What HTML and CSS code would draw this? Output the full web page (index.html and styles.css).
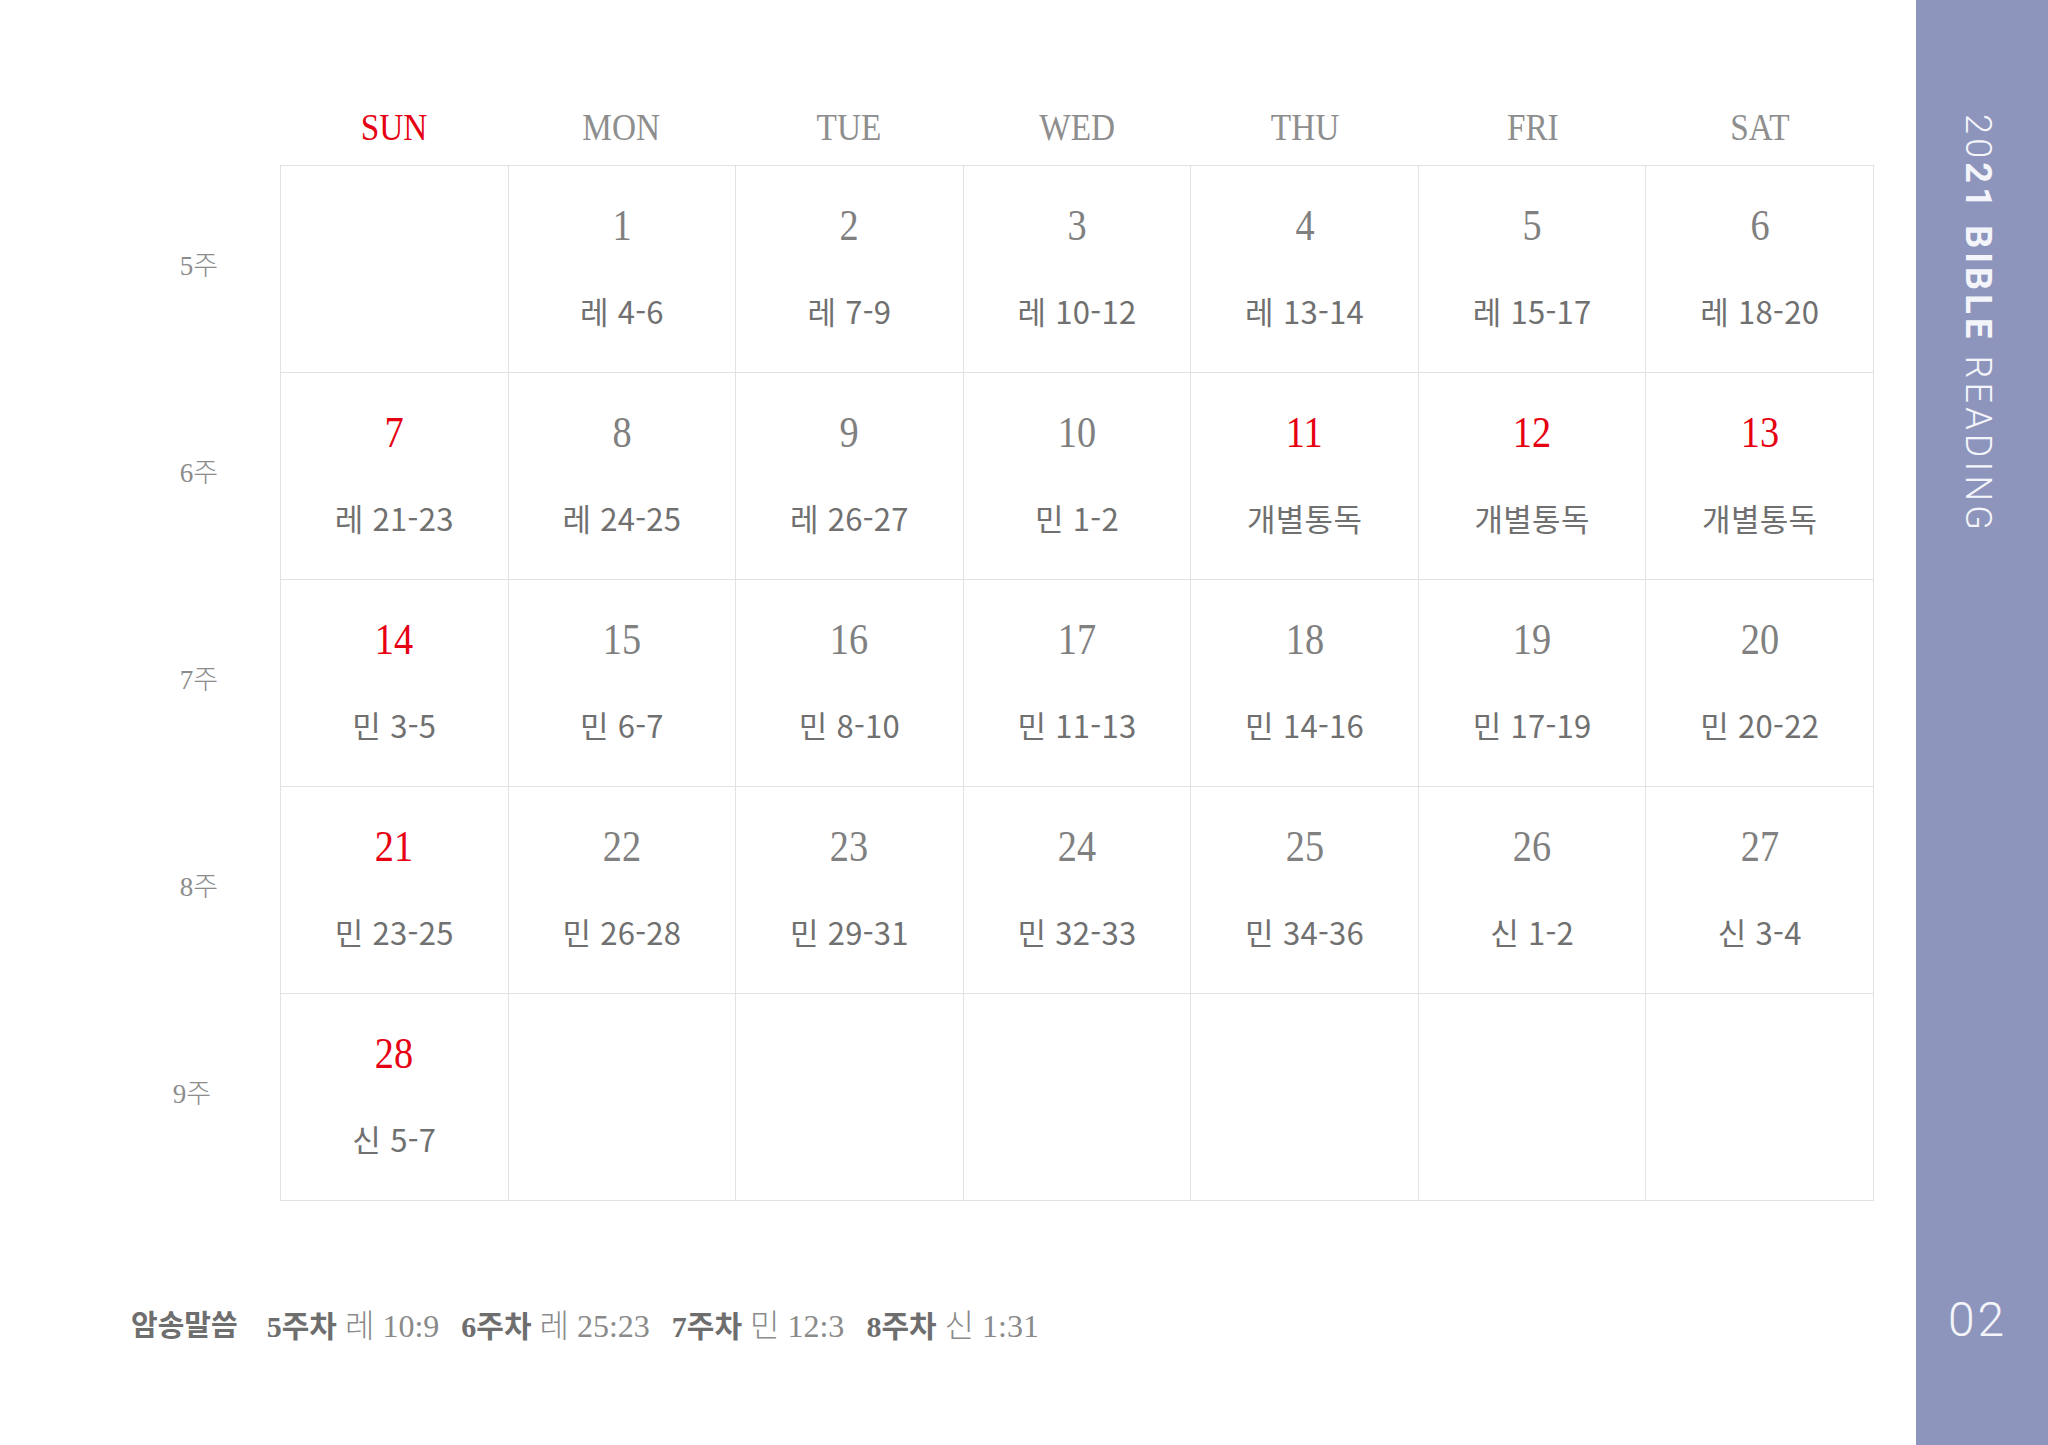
FILE: index.html
```html
<!DOCTYPE html>
<html lang="ko">
<head>
<meta charset="utf-8">
<title>2021 BIBLE READING 02</title>
<link rel="stylesheet" href="styles.css">
</head>
<body>
<div class="page">
  <main class="content">
    <div class="dow-row">
      <div class="dow sun"><span>SUN</span></div>
      <div class="dow"><span>MON</span></div>
      <div class="dow"><span>TUE</span></div>
      <div class="dow"><span>WED</span></div>
      <div class="dow"><span>THU</span></div>
      <div class="dow"><span>FRI</span></div>
      <div class="dow"><span>SAT</span></div>
    </div>
    <div class="cal-body">
      <div class="weeks">
        <div class="week">5주</div>
        <div class="week">6주</div>
        <div class="week">7주</div>
        <div class="week">8주</div>
        <div class="week w9">9주</div>
      </div>
      <div class="days">
        <div class="cell"></div>
        <div class="cell"><span class="num">1</span><span class="read">레 4-6</span></div>
        <div class="cell"><span class="num">2</span><span class="read">레 7-9</span></div>
        <div class="cell"><span class="num">3</span><span class="read">레 10-12</span></div>
        <div class="cell"><span class="num">4</span><span class="read">레 13-14</span></div>
        <div class="cell"><span class="num">5</span><span class="read">레 15-17</span></div>
        <div class="cell"><span class="num">6</span><span class="read">레 18-20</span></div>

        <div class="cell"><span class="num red">7</span><span class="read">레 21-23</span></div>
        <div class="cell"><span class="num">8</span><span class="read">레 24-25</span></div>
        <div class="cell"><span class="num">9</span><span class="read">레 26-27</span></div>
        <div class="cell"><span class="num">10</span><span class="read">민 1-2</span></div>
        <div class="cell"><span class="num red">11</span><span class="read">개별통독</span></div>
        <div class="cell"><span class="num red">12</span><span class="read">개별통독</span></div>
        <div class="cell"><span class="num red">13</span><span class="read">개별통독</span></div>

        <div class="cell"><span class="num red">14</span><span class="read">민 3-5</span></div>
        <div class="cell"><span class="num">15</span><span class="read">민 6-7</span></div>
        <div class="cell"><span class="num">16</span><span class="read">민 8-10</span></div>
        <div class="cell"><span class="num">17</span><span class="read">민 11-13</span></div>
        <div class="cell"><span class="num">18</span><span class="read">민 14-16</span></div>
        <div class="cell"><span class="num">19</span><span class="read">민 17-19</span></div>
        <div class="cell"><span class="num">20</span><span class="read">민 20-22</span></div>

        <div class="cell"><span class="num red">21</span><span class="read">민 23-25</span></div>
        <div class="cell"><span class="num">22</span><span class="read">민 26-28</span></div>
        <div class="cell"><span class="num">23</span><span class="read">민 29-31</span></div>
        <div class="cell"><span class="num">24</span><span class="read">민 32-33</span></div>
        <div class="cell"><span class="num">25</span><span class="read">민 34-36</span></div>
        <div class="cell"><span class="num">26</span><span class="read">신 1-2</span></div>
        <div class="cell"><span class="num">27</span><span class="read">신 3-4</span></div>

        <div class="cell"><span class="num red">28</span><span class="read">신 5-7</span></div>
        <div class="cell"></div>
        <div class="cell"></div>
        <div class="cell"></div>
        <div class="cell"></div>
        <div class="cell"></div>
        <div class="cell"></div>
      </div>
    </div>
    <footer class="memory">
      <span class="m-title">암송말씀</span>
      <span class="m-item"><b>5주차</b> 레 10:9</span>
      <span class="m-item"><b>6주차</b> 레 25:23</span>
      <span class="m-item"><b>7주차</b> 민 12:3</span>
      <span class="m-item"><b>8주차</b> 신 1:31</span>
    </footer>
  </main>
  <aside class="side">
    <div class="side-title"><span class="lt">20</span><span class="bd">21 BIBLE</span><span class="lt"> READING</span></div>
    <div class="page-no">02</div>
  </aside>
</div>
</body>
</html>
```

FILE: styles.css
```css
* { box-sizing: border-box; }

html, body {
  margin: 0;
  padding: 0;
  background: #ffffff;
}

.page {
  width: 2048px;
  height: 1445px;
  display: flex;
  background: #ffffff;
}

.content {
  width: 1916px;
  height: 1445px;
  padding-top: 110px;
  display: flex;
  flex-direction: column;
}

/* day of week header */
.dow-row {
  margin-left: 280px;
  width: 1594px;
  height: 55px;
  display: grid;
  grid-template-columns: repeat(7, 1fr);
}

.dow {
  text-align: center;
  font-family: "Liberation Serif", serif;
  font-size: 37px;
  line-height: 36px;
  color: #8e8e8e;
}

.dow span {
  display: inline-block;
  transform: scaleX(0.9);
}

.dow.sun { color: #e60012; }

/* body */
.cal-body {
  display: flex;
}

.weeks {
  width: 280px;
  padding-top: 1px;
  display: flex;
  flex-direction: column;
}

.week {
  height: 207px;
  display: flex;
  align-items: center;
  justify-content: flex-end;
  padding-right: 62px;
  padding-bottom: 12px;
  font-family: "Liberation Serif", "Noto Sans CJK KR", serif;
  font-weight: 300;
  font-size: 27px;
  color: #8c8c8c;
}

.week.w9 { padding-right: 69px; }

.days {
  width: 1594px;
  display: grid;
  grid-template-columns: repeat(7, 1fr);
  grid-auto-rows: 207px;
  border-top: 1px solid #e2e2e2;
  border-left: 1px solid #e2e2e2;
}

.cell {
  border-right: 1px solid #e2e2e2;
  border-bottom: 1px solid #e2e2e2;
  display: flex;
  flex-direction: column;
  align-items: center;
  padding-top: 37px;
}

.num {
  display: block;
  font-family: "Liberation Serif", serif;
  font-size: 44px;
  line-height: 46px;
  height: 46px;
  color: #808080;
  transform: scaleX(0.87);
}

.num.red { color: #e60012; }

.read {
  display: block;
  margin-top: 47px;
  font-family: "Noto Sans CJK KR", "Noto Sans", sans-serif;
  font-weight: 400;
  font-size: 31px;
  line-height: 30px;
  color: #707070;
  letter-spacing: 0.3px;
}

/* footer */
.memory {
  margin-top: 102px;
  padding-left: 131px;
  height: 40px;
  display: flex;
  align-items: center;
  gap: 22px;
  font-family: "Liberation Serif", "Noto Sans CJK KR", serif;
  color: #8a8a8a;
  white-space: nowrap;
}

.m-title {
  font-family: "Noto Sans CJK KR", sans-serif;
  font-weight: 700;
  font-size: 29px;
  color: #6e6e6e;
  margin-right: 7px;
}

.m-item {
  font-size: 32px;
  font-weight: 300;
}

.m-item b {
  font-size: 30px;
  font-weight: 700;
  color: #6e6e6e;
}

/* sidebar */
.side {
  width: 132px;
  height: 1445px;
  background: #8e95bd;
  display: flex;
  flex-direction: column;
  align-items: center;
  padding-top: 114px;
  padding-right: 9px;
  color: #f4f5fa;
}

.side-title {
  writing-mode: vertical-rl;
  font-family: Roboto, "Liberation Sans", sans-serif;
  font-size: 36px;
  letter-spacing: 4.2px;
  line-height: 36px;
}

.side-title .lt { font-weight: 300; }
.side-title .bd { font-weight: 700; }

.page-no {
  margin-top: auto;
  margin-bottom: 101px;
  font-family: Roboto, "Liberation Sans", sans-serif;
  font-weight: 300;
  font-size: 48px;
  line-height: 48px;
  letter-spacing: 3px;
}
```
